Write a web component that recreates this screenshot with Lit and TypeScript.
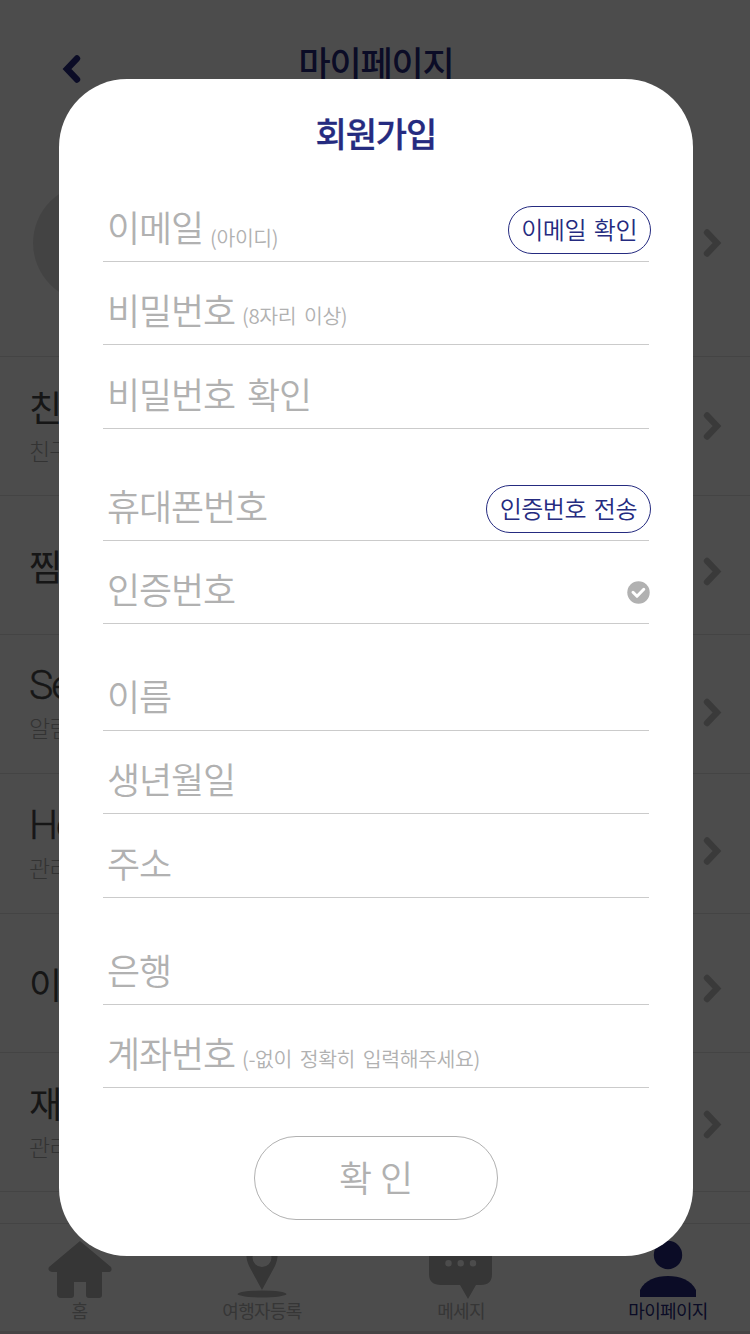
import { LitElement, html, css, svg } from "lit";
import { customElement } from "lit/decorators.js";
import { classMap } from "lit/directives/class-map.js";

interface MenuRow { title: string; sub?: string; height: number; shift: number; latin?: boolean }
interface Field { label: string; hint?: string; low?: boolean; action?: string; check?: boolean; height: number }

const ROWS: MenuRow[] = [
  { title: "친구", sub: "친구", height: 139, shift: 0 },
  { title: "찜", height: 139, shift: 6.5 },
  { title: "Set", sub: "알림", height: 139, shift: 8.5, latin: true },
  { title: "He", sub: "관리", height: 140, shift: 7, latin: true },
  { title: "이용", height: 139, shift: 5.5 },
  { title: "재능", sub: "관리", height: 139, shift: 2.5 },
];

const FIELDS: Field[] = [
  { label: "이메일", hint: "(아이디)", low: true, action: "이메일 확인", height: 83 },
  { label: "비밀번호", hint: "(8자리 이상)", height: 83 },
  { label: "비밀번호 확인", height: 84 },
  { label: "휴대폰번호", action: "인증번호 전송", height: 112 },
  { label: "인증번호", check: true, height: 83 },
  { label: "이름", height: 107 },
  { label: "생년월일", height: 83 },
  { label: "주소", height: 84 },
  { label: "은행", height: 107 },
  { label: "계좌번호", hint: "(-없이 정확히 입력해주세요)", height: 83 },
];

const chevron = html`<svg class="chev" width="20" height="30" viewBox="0 0 20 30">
  <path d="M5 4.5 15 15 5 25.5" fill="none" stroke="currentColor" stroke-width="6.4" stroke-linecap="round" stroke-linejoin="miter"/></svg>`;

const icons = {
  home: svg`<path d="M32 1 63 27Q65 32 60 32H54V55Q54 58 51 58H41Q38 58 38 55V42H26V55Q26 58 23 58H13Q9 58 9 54V32H4Q-1 31 1 27Z"/>`,
  pin: svg`<path fill-rule="evenodd" d="M32 50 19 26C12 10 20 0 32 0S52 10 45 26ZM32 8A9.5 9.5 0 1 0 32 27A9.5 9.5 0 1 0 32 8Z"/><ellipse cx="32" cy="54" rx="24.5" ry="3.4"/>`,
  chat: svg`<path fill-rule="evenodd" d="M12 1H52Q63 1 63 12V34Q63 45 52 45H47L39 59 31 45H12Q0 45 0 34V12Q0 1 12 1ZM19.5 20A3.2 3.2 0 1 0 19.5 26.4A3.2 3.2 0 1 0 19.5 20ZM31.7 20A3.2 3.2 0 1 0 31.7 26.4A3.2 3.2 0 1 0 31.7 20ZM44 20A3.2 3.2 0 1 0 44 26.4A3.2 3.2 0 1 0 44 20Z"/>`,
  user: svg`<circle cx="32" cy="15" r="14.2"/><path d="M4 57V50C9 40 20 36 32 36S55 40 60 50V57Z"/>`,
};

@customElement("app-root")
export class AppRoot extends LitElement {
  static styles = css`
    :host { display: block; position: relative; width: 750px; height: 1334px; overflow: hidden; background: #fff;
      font-family: "Noto Sans CJK KR", sans-serif; white-space: nowrap; }
    * { box-sizing: border-box; }
    .page { display: flex; flex-direction: column; height: 1334px; }
    .bar { display: grid; grid-template-columns: 140px 1fr 140px; height: 128px; color: #252b80; }
    .back { padding: 54px 0 0 62px; }
    .back .chev { transform: scaleX(-1); }
    .bar-title { padding-top: 36px; padding-left: 2px; text-align: center; font-weight: 500; font-size: 35px; line-height: 52px; letter-spacing: -1.2px; }
    .profile { display: flex; justify-content: space-between; height: 228px; padding: 50px 28px 0 33px; }
    .avatar { width: 118px; height: 118px; margin-top: 6px; border-radius: 50%; background: #e2e2e2; }
    .chev { display: block; color: #c4c4c4; }
    .back .chev { color: #252b80; }
    .profile .chev { margin-top: 50px; }
    .row { display: flex; align-items: center; justify-content: space-between; border-top: 1px solid #e4e4e4; padding: 0 28px 0 29px; }
    .title { font-size: 36px; line-height: 44px; letter-spacing: -1px; color: #4c4c4c; font-weight: 400; }
    .latin { font-family: Roboto, sans-serif; font-size: 41px; line-height: 44px; padding-top: 2px; font-weight: 300; letter-spacing: -2px; -webkit-text-stroke: 0.4px #4c4c4c; }
    .sub { font-size: 23px; line-height: 40px; padding-top: 2px; margin-bottom: -2px; color: #aaa; font-weight: 300; letter-spacing: -1px; }
    .latin + .sub { margin-top: -2px; margin-bottom: 0; }
    .tail { height: 32px; border-top: 1px solid #e4e4e4; }
    .nav { position: relative; flex: 1; border-top: 1px solid #e4e4e4; border-bottom: 3px solid #eae2e5; display: grid; grid-template-columns: 159px 206px 192px 193px; color: #b4b4b4; }
    .tab { display: flex; flex-direction: column; align-items: center; padding-top: 16px; }
    .tab svg { display: block; fill: currentColor; }
    .tab:nth-child(4) { padding-left: 29px; }
    .name { margin-top: -2px; font-size: 18px; line-height: 26px; letter-spacing: -0.7px; font-weight: 400; }
    .mine { color: #252b80; }
    .shade { position: absolute; inset: 0; background: rgba(0, 0, 0, 0.7); }
    .dialog { position: absolute; left: 59px; top: 78.5px; width: 633.7px; height: 1177.3px; border-radius: 68px; background: #fff; padding: 26.5px 44px 0; }
    .heading { margin: 0; height: 74px; padding-top: 1px; text-align: center; color: #252b80; font-weight: 500; font-size: 34px; line-height: 54px; letter-spacing: -1.1px; -webkit-text-stroke: 0.3px #252b80; }
    .field { display: flex; align-items: flex-end; width: 546px; border-bottom: 1px solid #cbcbcb; padding-left: 4px; color: #b1b1b1; }
    .label { font-size: 36px; line-height: 52px; letter-spacing: -1.1px; word-spacing: 5px; font-weight: 350; padding-bottom: 9px; }
    .hint { font-size: 20.5px; line-height: 30px; letter-spacing: -0.4px; word-spacing: 3.5px; font-weight: 350; margin-left: 7px; padding-bottom: 14px; }
    .low { padding-bottom: 9px; }
    .action { margin: 0 -1.5px 7px auto; height: 48px; border: 1.3px solid #252b80; border-radius: 24px; padding: 0 12.5px; color: #252b80; font-size: 24px; line-height: 44px; letter-spacing: -0.5px; word-spacing: 3px; font-weight: 350; }
    .check { margin: 0 -1.3px 19px auto; }
    .submit { display: block; width: 244.5px; height: 84px; margin: 48px 0 0 150.8px; border: 1px solid #b1b1b1; border-radius: 42px; background: none; padding: 0 0 4px; color: #b1b1b1; font: 350 36px/78px "Noto Sans CJK KR", sans-serif; text-align: center; }
  `;

  private row(r: MenuRow) {
    return html`<div class="row" style="height:${r.height}px">
      <div><div class=${classMap({ title: true, latin: !!r.latin })}>${r.title}</div>${r.sub ? html`<div class="sub">${r.sub}</div>` : ""}</div>
      <div style="transform:translateY(${r.shift}px)">${chevron}</div>
    </div>`;
  }

  private field(f: Field) {
    return html`<div class="field" style="height:${f.height}px">
      <span class="label">${f.label}</span>
      ${f.hint ? html`<span class=${classMap({ hint: true, low: !!f.low })}>${f.hint}</span>` : ""}
      ${f.action ? html`<span class="action">${f.action}</span>` : ""}
      ${f.check ? html`<svg class="check" width="23" height="23" viewBox="0 0 23 23"><circle cx="11.5" cy="11.5" r="11.2" fill="#b1b1b1"/><path d="M6 11.3 10 15.3 16.8 8.3" fill="none" stroke="#fff" stroke-width="3" stroke-linecap="round" stroke-linejoin="round"/></svg>` : ""}
    </div>`;
  }

  private tab(icon: keyof typeof icons, name: string) {
    return html`<div class=${classMap({ tab: true, mine: icon === "user" })}>
      <svg width="64" height="59" viewBox="0 0 64 59">${icons[icon]}</svg><span class="name">${name}</span></div>`;
  }

  render() {
    return html`
      <div class="page">
        <header class="bar"><div class="back">${chevron}</div><div class="bar-title">마이페이지</div></header>
        <section class="profile"><div class="avatar"></div>${chevron}</section>
        ${ROWS.map((r) => this.row(r))}
        <div class="tail"></div>
        <nav class="nav">${this.tab("home", "홈")}${this.tab("pin", "여행자등록")}${this.tab("chat", "메세지")}${this.tab("user", "마이페이지")}</nav>
      </div>
      <div class="shade"></div>
      <section class="dialog">
        <h1 class="heading">회원가입</h1>
        ${FIELDS.map((f) => this.field(f))}
        <button class="submit">확 인</button>
      </section>`;
  }
}
